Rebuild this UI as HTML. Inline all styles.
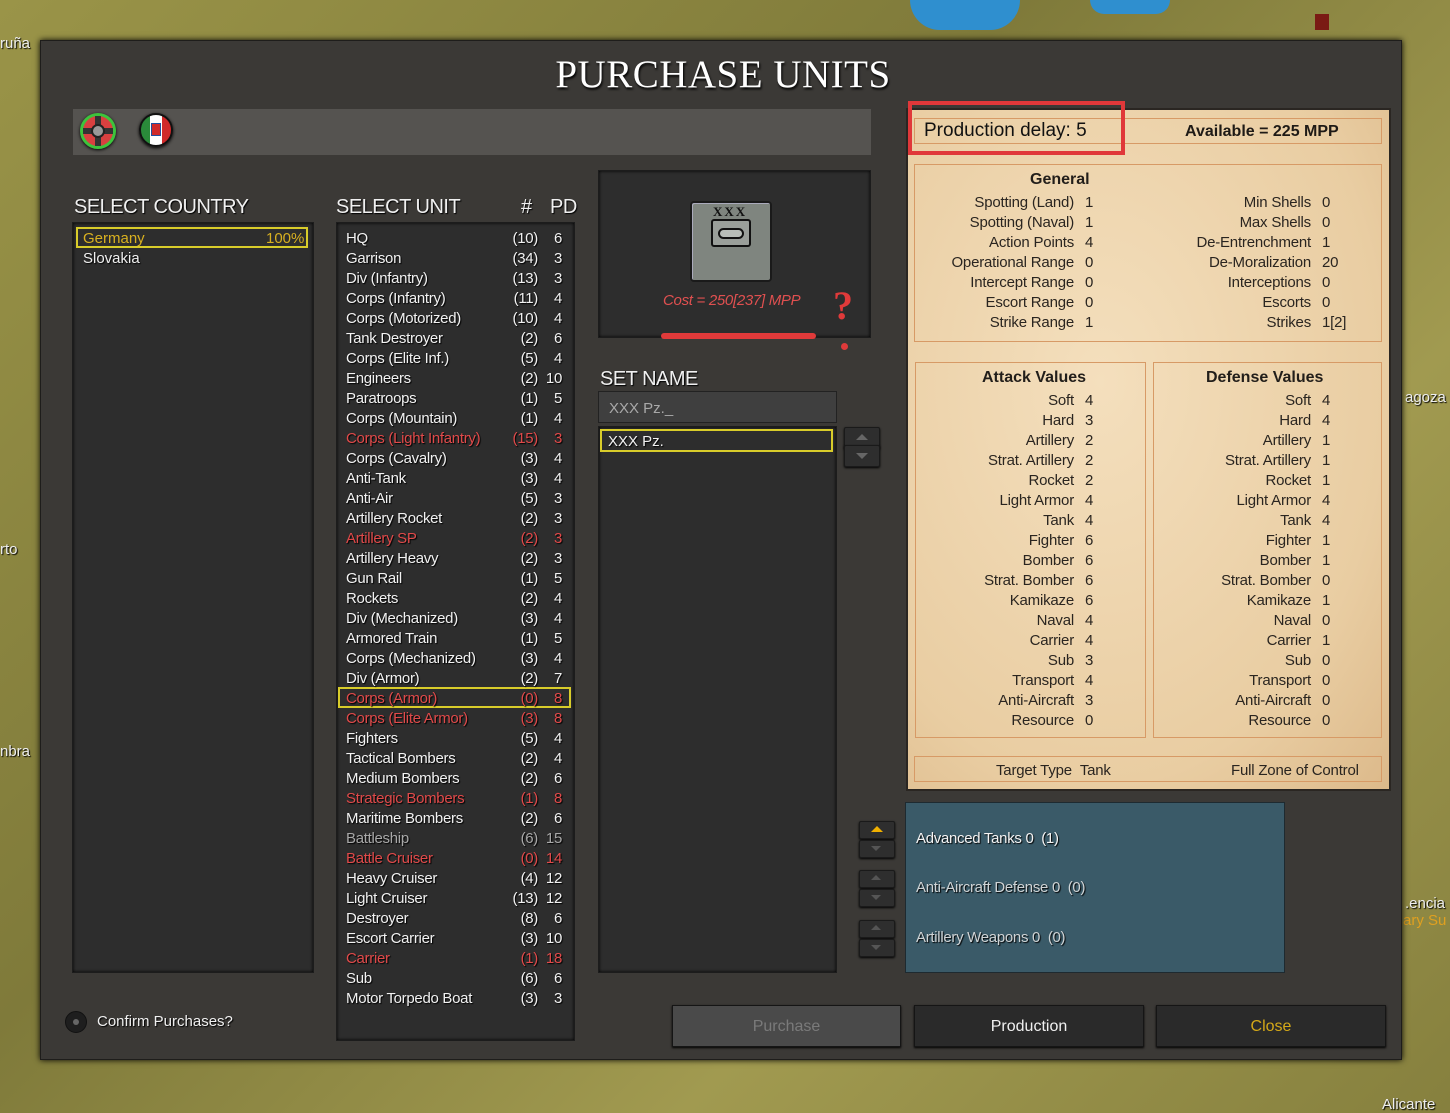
<!DOCTYPE html>
<html><head><meta charset="utf-8"><style>
*{margin:0;padding:0;box-sizing:border-box}
body{width:1450px;height:1113px;overflow:hidden;position:relative;font-family:"Liberation Sans",sans-serif;background:#8e8842}
.a{position:absolute}
.map{background:linear-gradient(135deg,#9a9448,#7f7a3a 40%,#a19a50 70%,#86803e)}
.dlg{left:40px;top:40px;width:1362px;height:1020px;background:#3b3936;border:1px solid #1e1d1b;box-shadow:0 0 6px #000}
.box{background:#2d2d2d;border:1px solid #1c1c1c;box-shadow:inset 0 0 3px #000}
.hd{color:#f0f0f0;font-size:20px;letter-spacing:-0.5px;text-shadow:1px 1px 1px #000}
.ul{left:346px;top:229px;width:222px;font-size:15px;letter-spacing:-0.3px;color:#f2f2f2;text-shadow:1px 1px 1px #000}
.ul div{height:20px;line-height:20px;position:relative}
.ul span{position:absolute;top:0}
.ul .n{right:30px}.ul .p{right:6px}
.r{color:#e04a4a}.g{color:#a8a8a8}
.par{background:#ecd3ab;background:radial-gradient(ellipse at 40% 40%,#f4dfbd,#e9cda2 70%,#dcb98a);}
.pb{border:1px solid #d79a66}
.st{font-size:15px;color:#2a2520;letter-spacing:-0.2px}
.st div{height:20px;line-height:20px;position:relative}
.st .l{position:absolute;right:0;text-align:right;white-space:nowrap}
.btn{background:#2a2a2a;border:1px solid #151515;box-shadow:0 1px 2px #000;color:#f0f0f0;font-size:16px;text-align:center;line-height:42px}
.arr{width:36px;height:22px;background:#2e2e2e;border:1px solid #1a1a1a;border-radius:2px;box-shadow:0 1px 2px #000}
</style></head><body>
<div class="a map" style="left:0;top:0;width:1450px;height:1113px"></div>
<div class="a" style="left:910px;top:0;width:110px;height:30px;background:#2f8fcf;border-radius:0 0 40px 40px"></div>
<div class="a" style="left:1090px;top:0;width:80px;height:14px;background:#2f8fcf;border-radius:0 0 30px 30px"></div>
<div class="a" style="left:1315px;top:14px;width:14px;height:16px;background:#7a1a14"></div>
<div class="a" style="left:0;top:35px;color:#eee;font-size:15px;text-shadow:1px 1px 1px #000">ruña</div>
<div class="a" style="left:1405px;top:389px;color:#eee;font-size:15px;text-shadow:1px 1px 1px #000">agoza</div>
<div class="a" style="left:0;top:541px;color:#eee;font-size:15px;text-shadow:1px 1px 1px #000">rto</div>
<div class="a" style="left:0;top:743px;color:#eee;font-size:15px;text-shadow:1px 1px 1px #000">nbra</div>
<div class="a" style="left:1405px;top:895px;color:#eee;font-size:15px;text-shadow:1px 1px 1px #000">.encia</div>
<div class="a" style="left:1403px;top:912px;color:#e0a020;font-size:15px">ary Su</div>
<div class="a" style="left:1382px;top:1096px;color:#eee;font-size:15px;text-shadow:1px 1px 1px #000">Alicante</div>

<div class="a dlg"></div>
<div class="a" style="left:0;top:52px;width:1446px;text-align:center;color:#fff;font-family:'Liberation Serif',serif;font-size:39px;letter-spacing:0.5px;text-shadow:1px 2px 2px #000">PURCHASE UNITS</div>

<div class="a" style="left:73px;top:109px;width:798px;height:46px;background:#555350"></div>
<div class="a" style="left:80px;top:113px;width:36px;height:36px;border-radius:50%;background:#d84040;border:3px solid #3cc43c;box-shadow:0 1px 3px #000"><div class="a" style="left:12px;top:0;width:6px;height:30px;background:#333"></div><div class="a" style="left:0;top:12px;width:30px;height:6px;background:#333"></div><div class="a" style="left:8px;top:8px;width:14px;height:14px;border-radius:50%;background:#999;border:2px solid #222"></div></div>
<div class="a" style="left:139px;top:113px;width:34px;height:34px;border-radius:50%;background:linear-gradient(90deg,#2a8a3a 0 30%,#fff 30% 70%,#d02a2a 70%);border:2px solid #111;box-shadow:0 1px 3px #000"><div class="a" style="left:10px;top:8px;width:10px;height:13px;background:#d02a2a;border:1px solid #2050a0"></div></div>

<div class="a hd" style="left:74px;top:196px">SELECT COUNTRY</div>
<div class="a box" style="left:72px;top:222px;width:242px;height:751px"></div>
<div class="a" style="left:76px;top:227px;width:232px;height:21px;border:2px solid #d8cc2a"></div>
<div class="a" style="left:83px;top:230px;color:#d8b020;font-size:15px">Germany</div>
<div class="a" style="left:266px;top:230px;color:#d8b020;font-size:15px">100%</div>
<div class="a" style="left:83px;top:250px;color:#f0f0f0;font-size:15px;text-shadow:1px 1px 1px #000">Slovakia</div>

<div class="a hd" style="left:336px;top:196px">SELECT UNIT</div>
<div class="a hd" style="left:521px;top:196px">#</div>
<div class="a hd" style="left:550px;top:196px">PD</div>
<div class="a box" style="left:336px;top:222px;width:239px;height:819px"></div>
<div class="a" style="left:338px;top:687px;width:233px;height:21px;border:2px solid #d8cc2a"></div>
<div class="a ul">
<div>HQ<span class="n">(10)</span><span class="p">6</span></div>
<div>Garrison<span class="n">(34)</span><span class="p">3</span></div>
<div>Div (Infantry)<span class="n">(13)</span><span class="p">3</span></div>
<div>Corps (Infantry)<span class="n">(11)</span><span class="p">4</span></div>
<div>Corps (Motorized)<span class="n">(10)</span><span class="p">4</span></div>
<div>Tank Destroyer<span class="n">(2)</span><span class="p">6</span></div>
<div>Corps (Elite Inf.)<span class="n">(5)</span><span class="p">4</span></div>
<div>Engineers<span class="n">(2)</span><span class="p">10</span></div>
<div>Paratroops<span class="n">(1)</span><span class="p">5</span></div>
<div>Corps (Mountain)<span class="n">(1)</span><span class="p">4</span></div>
<div class="r">Corps (Light Infantry)<span class="n">(15)</span><span class="p">3</span></div>
<div>Corps (Cavalry)<span class="n">(3)</span><span class="p">4</span></div>
<div>Anti-Tank<span class="n">(3)</span><span class="p">4</span></div>
<div>Anti-Air<span class="n">(5)</span><span class="p">3</span></div>
<div>Artillery Rocket<span class="n">(2)</span><span class="p">3</span></div>
<div class="r">Artillery SP<span class="n">(2)</span><span class="p">3</span></div>
<div>Artillery Heavy<span class="n">(2)</span><span class="p">3</span></div>
<div>Gun Rail<span class="n">(1)</span><span class="p">5</span></div>
<div>Rockets<span class="n">(2)</span><span class="p">4</span></div>
<div>Div (Mechanized)<span class="n">(3)</span><span class="p">4</span></div>
<div>Armored Train<span class="n">(1)</span><span class="p">5</span></div>
<div>Corps (Mechanized)<span class="n">(3)</span><span class="p">4</span></div>
<div>Div (Armor)<span class="n">(2)</span><span class="p">7</span></div>
<div class="r">Corps (Armor)<span class="n">(0)</span><span class="p">8</span></div>
<div class="r">Corps (Elite Armor)<span class="n">(3)</span><span class="p">8</span></div>
<div>Fighters<span class="n">(5)</span><span class="p">4</span></div>
<div>Tactical Bombers<span class="n">(2)</span><span class="p">4</span></div>
<div>Medium Bombers<span class="n">(2)</span><span class="p">6</span></div>
<div class="r">Strategic Bombers<span class="n">(1)</span><span class="p">8</span></div>
<div>Maritime Bombers<span class="n">(2)</span><span class="p">6</span></div>
<div class="g">Battleship<span class="n">(6)</span><span class="p">15</span></div>
<div class="r">Battle Cruiser<span class="n">(0)</span><span class="p">14</span></div>
<div>Heavy Cruiser<span class="n">(4)</span><span class="p">12</span></div>
<div>Light Cruiser<span class="n">(13)</span><span class="p">12</span></div>
<div>Destroyer<span class="n">(8)</span><span class="p">6</span></div>
<div>Escort Carrier<span class="n">(3)</span><span class="p">10</span></div>
<div class="r">Carrier<span class="n">(1)</span><span class="p">18</span></div>
<div>Sub<span class="n">(6)</span><span class="p">6</span></div>
<div>Motor Torpedo Boat<span class="n">(3)</span><span class="p">3</span></div>
</div>

<div class="a" style="left:65px;top:1011px;width:22px;height:22px;border-radius:50%;background:#1e1e1e;border:1px solid #111"><div class="a" style="left:7px;top:7px;width:6px;height:6px;border-radius:50%;background:#666"></div></div>
<div class="a" style="left:97px;top:1013px;color:#f0f0f0;font-size:15px;text-shadow:1px 1px 1px #000">Confirm Purchases?</div>

<div class="a box" style="left:598px;top:170px;width:273px;height:168px"></div>
<div class="a" style="left:690px;top:201px;width:82px;height:81px;background:#7f857f;border:2px solid #1a1a1a;border-radius:4px;box-shadow:inset 1px 1px 0 #aab;"></div>
<div class="a" style="left:713px;top:204px;font-family:'Liberation Serif',serif;font-size:13px;font-weight:bold;color:#111;letter-spacing:2px">XXX</div>
<div class="a" style="left:711px;top:219px;width:40px;height:28px;border:2px solid #111;border-radius:3px;background:#9a9f9a"><div class="a" style="left:5px;top:7px;width:26px;height:11px;border:2px solid #111;border-radius:6px;background:#b8bdb8"></div></div>
<div class="a" style="left:663px;top:292px;color:#e05050;font-size:15px;font-style:italic;letter-spacing:-0.3px">Cost = 250[237] MPP</div>
<div class="a" style="left:661px;top:333px;width:155px;height:6px;background:#e03a3a;border-radius:3px"></div>
<div class="a" style="left:833px;top:282px;color:#e03a3a;font-size:40px;font-weight:bold;font-family:'Liberation Serif',serif">?</div>
<div class="a" style="left:841px;top:343px;width:7px;height:7px;border-radius:50%;background:#e03a3a"></div>

<div class="a hd" style="left:600px;top:368px">SET NAME</div>
<div class="a" style="left:598px;top:391px;width:239px;height:32px;background:#3f3f3f;border:1px solid #222"></div>
<div class="a" style="left:609px;top:400px;color:#a8a8a8;font-size:15px">XXX Pz._</div>
<div class="a box" style="left:598px;top:426px;width:239px;height:547px"></div>
<div class="a" style="left:600px;top:429px;width:233px;height:23px;border:2px solid #d8cc2a"></div>
<div class="a" style="left:608px;top:433px;color:#f0f0f0;font-size:15px;text-shadow:1px 1px 1px #000">XXX Pz.</div>
<div class="a arr" style="left:844px;top:427px"></div><div class="a arr" style="left:844px;top:445px"></div>
<div class="a" style="left:856px;top:434px;border:6px solid transparent;border-bottom-color:#666;border-top:0"></div>
<div class="a" style="left:856px;top:453px;border:6px solid transparent;border-top-color:#666;border-bottom:0"></div>

<div class="a par" style="left:906px;top:108px;width:485px;height:683px;border:2px solid #2a2622"></div>
<div class="a pb" style="left:914px;top:118px;width:468px;height:26px"></div>
<div class="a" style="left:908px;top:101px;width:217px;height:54px;border:4px solid #e0383a"></div>
<div class="a" style="left:924px;top:120px;color:#111;font-size:19px">Production delay: 5</div>
<div class="a" style="left:1185px;top:123px;color:#1e1a16;font-size:16px;font-weight:bold">Available = 225 MPP</div>

<div class="a pb" style="left:914px;top:164px;width:468px;height:178px"></div>
<div class="a" style="left:1030px;top:171px;font-size:16px;font-weight:bold;color:#221e1a">General</div>
<div class="a st" style="left:900px;top:193px;width:174px">
<div><span class="l">Spotting (Land)</span></div><div><span class="l">Spotting (Naval)</span></div><div><span class="l">Action Points</span></div><div><span class="l">Operational Range</span></div><div><span class="l">Intercept Range</span></div><div><span class="l">Escort Range</span></div><div><span class="l">Strike Range</span></div></div>
<div class="a st" style="left:1085px;top:193px"><div>1</div><div>1</div><div>4</div><div>0</div><div>0</div><div>0</div><div>1</div></div>
<div class="a st" style="left:1140px;top:193px;width:171px">
<div><span class="l">Min Shells</span></div><div><span class="l">Max Shells</span></div><div><span class="l">De-Entrenchment</span></div><div><span class="l">De-Moralization</span></div><div><span class="l">Interceptions</span></div><div><span class="l">Escorts</span></div><div><span class="l">Strikes</span></div></div>
<div class="a st" style="left:1322px;top:193px"><div>0</div><div>0</div><div>1</div><div>20</div><div>0</div><div>0</div><div>1[2]</div></div>

<div class="a pb" style="left:915px;top:362px;width:231px;height:376px"></div>
<div class="a pb" style="left:1153px;top:362px;width:229px;height:376px"></div>
<div class="a" style="left:982px;top:369px;font-size:16px;font-weight:bold;color:#221e1a">Attack Values</div>
<div class="a" style="left:1206px;top:369px;font-size:16px;font-weight:bold;color:#221e1a">Defense Values</div>
<div class="a st" style="left:920px;top:391px;width:154px">
<div><span class="l">Soft</span></div><div><span class="l">Hard</span></div><div><span class="l">Artillery</span></div><div><span class="l">Strat. Artillery</span></div><div><span class="l">Rocket</span></div><div><span class="l">Light Armor</span></div><div><span class="l">Tank</span></div><div><span class="l">Fighter</span></div><div><span class="l">Bomber</span></div><div><span class="l">Strat. Bomber</span></div><div><span class="l">Kamikaze</span></div><div><span class="l">Naval</span></div><div><span class="l">Carrier</span></div><div><span class="l">Sub</span></div><div><span class="l">Transport</span></div><div><span class="l">Anti-Aircraft</span></div><div><span class="l">Resource</span></div></div>
<div class="a st" style="left:1085px;top:391px"><div>4</div><div>3</div><div>2</div><div>2</div><div>2</div><div>4</div><div>4</div><div>6</div><div>6</div><div>6</div><div>6</div><div>4</div><div>4</div><div>3</div><div>4</div><div>3</div><div>0</div></div>
<div class="a st" style="left:1160px;top:391px;width:151px">
<div><span class="l">Soft</span></div><div><span class="l">Hard</span></div><div><span class="l">Artillery</span></div><div><span class="l">Strat. Artillery</span></div><div><span class="l">Rocket</span></div><div><span class="l">Light Armor</span></div><div><span class="l">Tank</span></div><div><span class="l">Fighter</span></div><div><span class="l">Bomber</span></div><div><span class="l">Strat. Bomber</span></div><div><span class="l">Kamikaze</span></div><div><span class="l">Naval</span></div><div><span class="l">Carrier</span></div><div><span class="l">Sub</span></div><div><span class="l">Transport</span></div><div><span class="l">Anti-Aircraft</span></div><div><span class="l">Resource</span></div></div>
<div class="a st" style="left:1322px;top:391px"><div>4</div><div>4</div><div>1</div><div>1</div><div>1</div><div>4</div><div>4</div><div>1</div><div>1</div><div>0</div><div>1</div><div>0</div><div>1</div><div>0</div><div>0</div><div>0</div><div>0</div></div>

<div class="a pb" style="left:914px;top:756px;width:468px;height:26px"></div>
<div class="a st" style="left:996px;top:761px"><div>Target Type&nbsp;&nbsp;Tank</div></div>
<div class="a st" style="left:1231px;top:761px"><div>Full Zone of Control</div></div>

<div class="a" style="left:905px;top:802px;width:380px;height:171px;background:#3a5a68;border:1px solid #1e2a30"></div>
<div class="a" style="left:916px;top:830px;color:#f4f4f4;font-size:15px;letter-spacing:-0.3px;text-shadow:1px 1px 1px #000">Advanced Tanks 0&nbsp; (1)</div>
<div class="a" style="left:916px;top:879px;color:#cfd4d6;font-size:15px;letter-spacing:-0.3px;text-shadow:1px 1px 1px #000">Anti-Aircraft Defense 0&nbsp; (0)</div>
<div class="a" style="left:916px;top:929px;color:#cfd4d6;font-size:15px;letter-spacing:-0.3px;text-shadow:1px 1px 1px #000">Artillery Weapons 0&nbsp; (0)</div>
<div class="a arr" style="left:859px;top:821px;height:18px"></div><div class="a arr" style="left:859px;top:840px;height:18px"></div>
<div class="a arr" style="left:859px;top:870px;height:18px"></div><div class="a arr" style="left:859px;top:889px;height:18px"></div>
<div class="a arr" style="left:859px;top:920px;height:18px"></div><div class="a arr" style="left:859px;top:939px;height:18px"></div>
<div class="a" style="left:871px;top:826px;border:6px solid transparent;border-bottom-color:#f0b000;border-top:0"></div>
<div class="a" style="left:871px;top:846px;border:5px solid transparent;border-top-color:#555;border-bottom:0"></div>
<div class="a" style="left:871px;top:875px;border:5px solid transparent;border-bottom-color:#555;border-top:0"></div>
<div class="a" style="left:871px;top:895px;border:5px solid transparent;border-top-color:#555;border-bottom:0"></div>
<div class="a" style="left:871px;top:925px;border:5px solid transparent;border-bottom-color:#555;border-top:0"></div>
<div class="a" style="left:871px;top:945px;border:5px solid transparent;border-top-color:#555;border-bottom:0"></div>

<div class="a btn" style="left:672px;top:1005px;width:229px;height:42px;background:#4a4a4a;color:#7a7a7a">Purchase</div>
<div class="a btn" style="left:914px;top:1005px;width:230px;height:42px">Production</div>
<div class="a btn" style="left:1156px;top:1005px;width:230px;height:42px;color:#d4a818">Close</div>
</body></html>
